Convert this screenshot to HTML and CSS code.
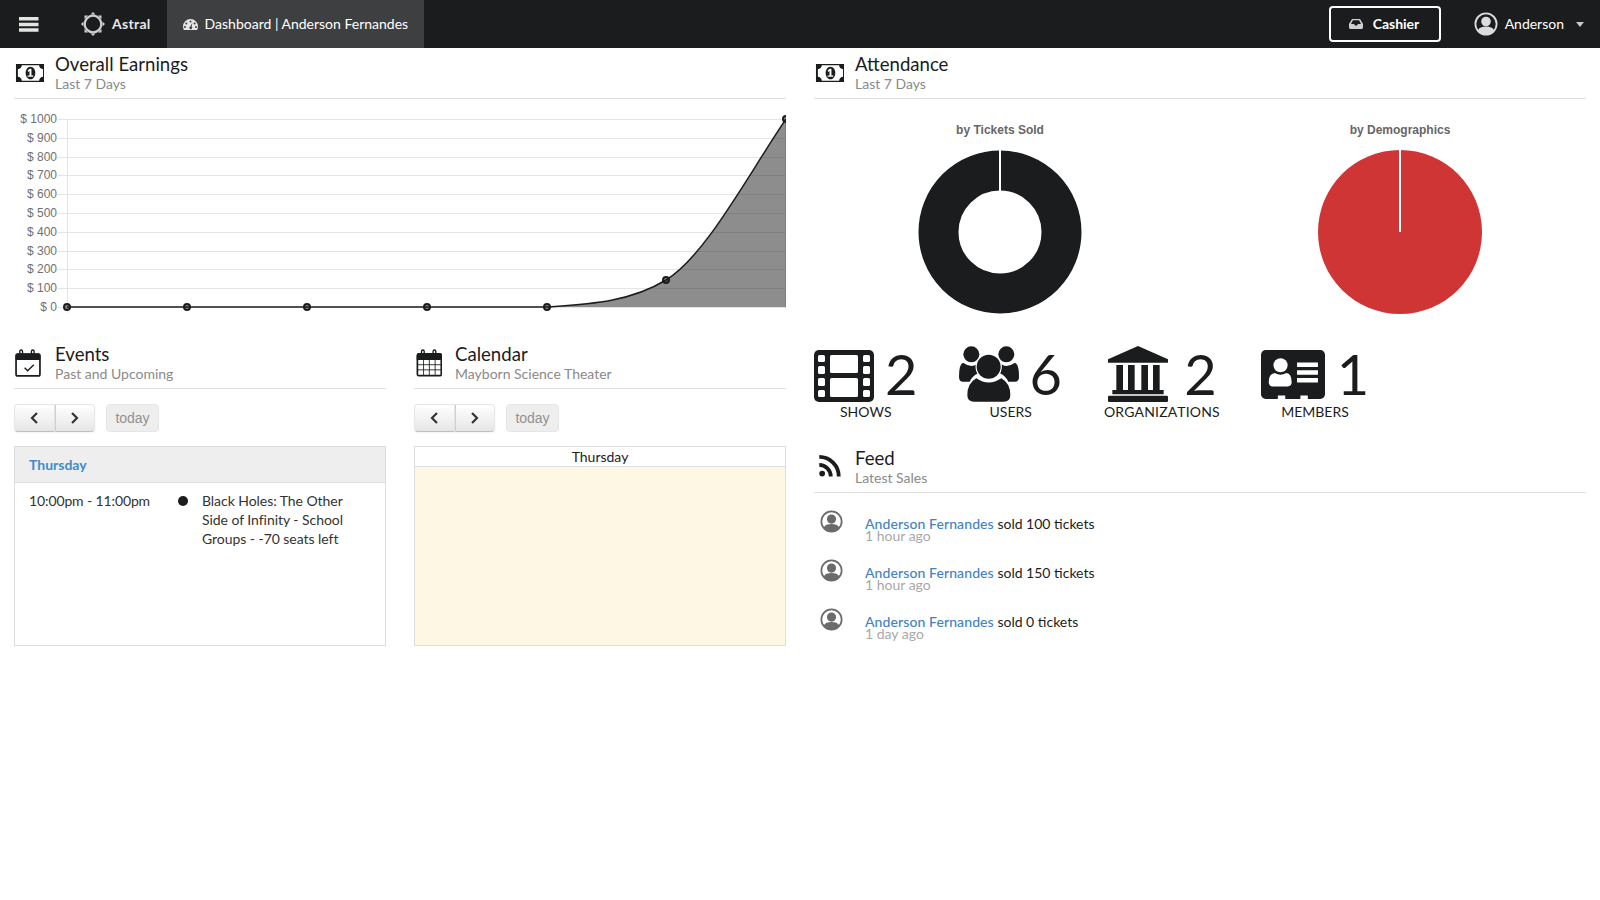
FILE: index.html
```html
<!DOCTYPE html>
<html lang="en">
<head>
<meta charset="utf-8">
<title>Dashboard | Anderson Fernandes</title>
<link rel="stylesheet" href="styles.css">
</head>
<body>
<svg class="defs" width="0" height="0" aria-hidden="true">
  <defs>
    <symbol id="money" viewBox="64 320 1920 1152"><path d="M896 1152h384v-96h-128v-448h-114l-148 137 77 80q42-37 55-57h2v288h-128v96zm512-256q0 70-21 142t-59.500 134-101.500 101-138 39-138-39-101.500-101-59.500-134-21-142 21-142 59.500-134 101.500-101 138-39 138 39 101.500 101 59.500 134 21 142zm512 256v-512q-106 0-181-75t-75-181h-1152q0 106-75 181t-181 75v512q106 0 181 75t75 181h1152q0-106 75-181t181-75zm128-832v1152q0 26-19 45t-45 19h-1792q-26 0-45-19t-19-45v-1152q0-26 19-45t45-19h1792q26 0 45 19t19 45z"/></symbol>
    <symbol id="avatar" viewBox="0 0 24 24">
      <circle cx="12" cy="12" r="10.600" fill="none" stroke="currentColor" stroke-width="1.800"/>
      <circle cx="12" cy="9.500" r="4.800" fill="currentColor"/>
      <path d="M3.800 18.500C5 15.500 8 14.500 12 14.500s7 1 8.200 4A10.600 10.600 0 0 1 12 22.600 10.600 10.600 0 0 1 3.800 18.500z" fill="currentColor"/>
    </symbol>
    <symbol id="chev-left" viewBox="0 0 12 14"><path d="M9 2 4 7l5 5" fill="none" stroke="currentColor" stroke-width="2.200"/></symbol>
    <symbol id="chev-right" viewBox="0 0 12 14"><path d="m3 2 5 5-5 5" fill="none" stroke="currentColor" stroke-width="2.200"/></symbol>
  </defs>
</svg>

<nav class="navbar">
  <a class="nav-burger" aria-label="Menu">
    <svg width="20" height="15" viewBox="0 0 20 15"><path d="M0 0h19.500v3.500H0zM0 5.700h19.500v3.500H0zM0 11.300h19.500v3.500H0z"/></svg>
  </a>
  <a class="nav-brand">
    <svg class="brand-sun" width="24" height="24" viewBox="-12 -12 24 24">
      <circle r="8.300" fill="none" stroke="currentColor" stroke-width="2.200"/>
      <g fill="currentColor">
        <path d="M-2.500-9.500 0-12 2.500-9.500z"/>
        <path d="M-2.500-9.500 0-12 2.500-9.500z" transform="rotate(45)"/>
        <path d="M-2.500-9.500 0-12 2.500-9.500z" transform="rotate(90)"/>
        <path d="M-2.500-9.500 0-12 2.500-9.500z" transform="rotate(135)"/>
        <path d="M-2.500-9.500 0-12 2.500-9.500z" transform="rotate(180)"/>
        <path d="M-2.500-9.500 0-12 2.500-9.500z" transform="rotate(225)"/>
        <path d="M-2.500-9.500 0-12 2.500-9.500z" transform="rotate(270)"/>
        <path d="M-2.500-9.500 0-12 2.500-9.500z" transform="rotate(315)"/>
      </g>
    </svg>
    <span>Astral</span>
  </a>
  <a class="nav-tab">
    <svg width="15" height="11" viewBox="0 0 15 11"><path fill-rule="evenodd" d="M7.500 0A7.500 7.500 0 0 0 0 7.500c0 1.300.3 2.500.9 3.500h13.200c.6-1 .9-2.200.9-3.500A7.500 7.500 0 0 0 7.500 0zM7.500 1.500a1 1 0 1 1 0 2 1 1 0 0 1 0-2zM3.300 3.400a1 1 0 1 1 0 2 1 1 0 0 1 0-2zM11.700 3.400a1 1 0 1 1 0 2 1 1 0 0 1 0-2zM2 7a1 1 0 1 1 0 2 1 1 0 0 1 0-2zM13 7a1 1 0 1 1 0 2 1 1 0 0 1 0-2zM9.500 3.500 8.600 7.600a1.400 1.400 0 1 1-1.300-.2z"/></svg>
    <span>Dashboard | Anderson Fernandes</span>
  </a>
  <div class="nav-spacer"></div>
  <a class="nav-cashier">
    <svg width="14" height="10" viewBox="0 0 14 10"><path fill-rule="evenodd" d="M3 0h8l3 5v3.500c0 .8-.7 1.500-1.500 1.500h-11C.7 10 0 9.300 0 8.500V5zm.9 1.300L2 5h3l1 1.500h2L9 5h3l-1.900-3.700z"/></svg>
    <span>Cashier</span>
  </a>
  <a class="nav-user">
    <svg class="user-avatar" width="24" height="24"><use href="#avatar"/></svg>
    <span>Anderson</span>
    <i class="caret"></i>
  </a>
</nav>

<main class="page">
  <div class="column">
    <section class="panel">
      <header class="head">
        <svg class="head-icon icon-money" width="29" height="18"><use href="#money"/></svg>
        <div><h2>Overall Earnings</h2><p>Last 7 Days</p></div>
      </header>
      <svg class="earnings" viewBox="14 108 772 210" width="772" height="210" role="img" aria-label="Earnings chart">
        <g class="grid">
          <path d="M58 119.500H786M58 138.500H786M58 157.500H786M58 175.500H786M58 194.500H786M58 213.500H786M58 232.500H786M58 251.500H786M58 269.500H786M58 288.500H786M58 307.500H786M67.500 119V313M785.500 119V307"/>
        </g>
        <g class="ticks">
          <text x="57" y="123">$ 1000</text>
          <text x="57" y="142">$ 900</text>
          <text x="57" y="161">$ 800</text>
          <text x="57" y="179">$ 700</text>
          <text x="57" y="198">$ 600</text>
          <text x="57" y="217">$ 500</text>
          <text x="57" y="236">$ 400</text>
          <text x="57" y="255">$ 300</text>
          <text x="57" y="273">$ 200</text>
          <text x="57" y="292">$ 100</text>
          <text x="57" y="311">$ 0</text>
        </g>
        <path class="area" d="M547 307C590 304 630 302 666 280C705 256 745 180 786 119V307Z"/>
        <path class="line" d="M67 307H547C590 304 630 302 666 280C705 256 745 180 786 119"/>
        <g class="points">
          <circle cx="67" cy="307" r="3"/><circle cx="187" cy="307" r="3"/><circle cx="307" cy="307" r="3"/><circle cx="427" cy="307" r="3"/><circle cx="547" cy="307" r="3"/><circle cx="666" cy="280" r="3"/><circle cx="786" cy="119" r="3"/>
        </g>
      </svg>
    </section>

    <div class="split">
      <section class="panel">
        <header class="head">
          <svg class="head-icon icon-cal" width="26" height="28" viewBox="48 30 76 82"><rect x="51" y="45" width="70" height="64" rx="5" fill="none" stroke="currentColor" stroke-width="5"/><path d="M50 62h72v-14q0-5-5-5H55q-5 0-5 5z"/><path d="M62 44V37q0-4 4-4t4 4v7M96 44V37q0-4 4-4t4 4v7" fill="none" stroke="currentColor" stroke-width="4"/><path d="m76 85 9 9 18-18" fill="none" stroke="currentColor" stroke-width="4"/></svg>
          <div><h2>Events</h2><p>Past and Upcoming</p></div>
        </header>
        <div class="toolbar">
          <div class="btn-pair">
            <button class="btn" aria-label="Previous"><svg width="12" height="14"><use href="#chev-left"/></svg></button>
            <button class="btn" aria-label="Next"><svg width="12" height="14"><use href="#chev-right"/></svg></button>
          </div>
          <button class="btn today" disabled>today</button>
        </div>
        <div class="box">
          <div class="list-day">Thursday</div>
          <div class="list-row">
            <span class="list-time">10:00pm - 11:00pm</span>
            <i class="list-dot"></i>
            <span class="list-title">Black Holes: The Other Side of Infinity - School Groups - -70 seats left</span>
          </div>
        </div>
      </section>
      <section class="panel">
        <header class="head">
          <svg class="head-icon icon-cal cal-shift" width="26" height="28" viewBox="48 30 76 82"><rect x="52" y="46" width="70" height="62" rx="4" fill="none" stroke="currentColor" stroke-width="5"/><path d="M50 62h74V47q0-5-5-5H55q-5 0-5 5z"/><path d="M64 44V37q0-4 4-4t4 4v7M98 44V37q0-4 4-4t4 4v7" fill="none" stroke="currentColor" stroke-width="4"/><path d="M70 62v44M87 62v44M104 62v44M52 76h70M52 91h70" fill="none" stroke="currentColor" stroke-width="2.500"/></svg>
          <div><h2>Calendar</h2><p>Mayborn Science Theater</p></div>
        </header>
        <div class="toolbar">
          <div class="btn-pair">
            <button class="btn" aria-label="Previous"><svg width="12" height="14"><use href="#chev-left"/></svg></button>
            <button class="btn" aria-label="Next"><svg width="12" height="14"><use href="#chev-right"/></svg></button>
          </div>
          <button class="btn today" disabled>today</button>
        </div>
        <div class="box cal-box">
          <div class="cal-day">Thursday</div>
          <div class="cal-body"></div>
        </div>
      </section>
    </div>
  </div>

  <div class="column">
    <section class="panel">
      <header class="head">
        <svg class="head-icon icon-money" width="29" height="18"><use href="#money"/></svg>
        <div><h2>Attendance</h2><p>Last 7 Days</p></div>
      </header>
      <div class="split pies">
        <figure class="pie">
          <figcaption>by Tickets Sold</figcaption>
          <svg width="164" height="164" viewBox="-82 -82 164 164" role="img" aria-label="by Tickets Sold">
            <circle class="donut" r="61.500" />
            <path class="slice" d="M0-82V-41"/>
          </svg>
        </figure>
        <figure class="pie">
          <figcaption>by Demographics</figcaption>
          <svg width="164" height="164" viewBox="-82 -82 164 164" role="img" aria-label="by Demographics">
            <circle class="full" r="82"/>
            <path class="slice" d="M0-82V0"/>
          </svg>
        </figure>
      </div>
    </section>

    <div class="stats">
      <div class="stat">
        <div class="stat-value film-value">
          <svg class="film" width="60" height="52" viewBox="0 0 60 52"><rect width="60" height="52" rx="5" class="ink"/><g class="cut"><rect x="4" y="5" width="7" height="7" rx="1.500"/><rect x="4" y="16" width="7" height="8" rx="1.500"/><rect x="4" y="28" width="7" height="8" rx="1.500"/><rect x="4" y="40" width="7" height="7" rx="1.500"/><rect x="49" y="5" width="7" height="7" rx="1.500"/><rect x="49" y="16" width="7" height="8" rx="1.500"/><rect x="49" y="28" width="7" height="8" rx="1.500"/><rect x="49" y="40" width="7" height="7" rx="1.500"/><rect x="16" y="5" width="28" height="18" rx="1.500"/><rect x="16" y="28" width="28" height="19" rx="1.500"/></g></svg>
          <span>2</span>
        </div>
        <div class="stat-label">Shows</div>
      </div>
      <div class="stat">
        <div class="stat-value">
          <svg width="60" height="56" viewBox="478 18 180 168"><g class="ink"><circle cx="515" cy="43" r="24"/><circle cx="620" cy="43" r="24"/><path d="M510 125H490Q478 125 478 110Q478 72 490 68Q515 85 532 72Q530 85 535 100Q518 108 510 125Z"/><path d="M626 125H646Q658 125 658 110Q658 72 646 68Q621 85 604 72Q606 85 601 100Q618 108 626 125Z"/><g class="ringed"><circle cx="567" cy="80" r="36"/><path d="M503 165Q503 130 530 115Q567 140 605 115Q632 130 632 165Q632 185 612 185H523Q503 185 503 165Z"/></g></g></svg>
          <span>6</span>
        </div>
        <div class="stat-label">Users</div>
      </div>
      <div class="stat stat-org">
        <div class="stat-value org-value">
          <svg width="62" height="56" viewBox="54 18 182 168"><g class="ink"><path d="M145 18 235 58V68H55V58Z"/><path d="M80 75h20v75H80zM115 75h20v75h-20zM155 75h20v75h-20zM190 75h20v75h-20zM68 150h154v13H68z"/><rect x="55" y="167" width="180" height="19" rx="4"/></g></svg>
          <span>2</span>
        </div>
        <div class="stat-label org-label">Organizations</div>
      </div>
      <div class="stat">
        <div class="stat-value member-value">
          <svg width="64" height="49" viewBox="515 30 190 145"><rect x="515" y="30" width="190" height="145" rx="14" class="ink"/><g class="cut"><circle cx="573" cy="75" r="21"/><path d="M538 125Q538 100 556 98Q573 108 590 98Q606 100 606 125Q606 138 594 138H550Q538 138 538 125Z"/><path d="M622 67h62v13h-62zM622 90h62v13h-62zM622 113h62v13h-62zM565 165h22v10h-22zM632 165h22v10h-22z"/></g></svg>
          <span>1</span>
        </div>
        <div class="stat-label">Members</div>
      </div>
    </div>

    <section class="panel">
      <header class="head">
        <svg class="head-icon icon-rss" width="23" height="23" viewBox="52 44 72 72"><circle cx="65" cy="102" r="9"/><path d="M56 75A36 36 0 0 1 92 111M56 50A61 61 0 0 1 117 111" fill="none" stroke="currentColor" stroke-width="12"/></svg>
        <div><h2>Feed</h2><p>Latest Sales</p></div>
      </header>
      <ul class="feed">
        <li class="feed-item">
          <svg class="feed-avatar" width="23" height="23"><use href="#avatar"/></svg>
          <div class="feed-text"><div><a>Anderson Fernandes</a> sold 100 tickets</div><time>1 hour ago</time></div>
        </li>
        <li class="feed-item">
          <svg class="feed-avatar" width="23" height="23"><use href="#avatar"/></svg>
          <div class="feed-text"><div><a>Anderson Fernandes</a> sold 150 tickets</div><time>1 hour ago</time></div>
        </li>
        <li class="feed-item">
          <svg class="feed-avatar" width="23" height="23"><use href="#avatar"/></svg>
          <div class="feed-text"><div><a>Anderson Fernandes</a> sold 0 tickets</div><time>1 day ago</time></div>
        </li>
      </ul>
    </section>
  </div>
</main>
</body>
</html>
```

FILE: styles.css
```css
* { box-sizing: border-box; }
html, body { margin: 0; padding: 0; }
body {
  background: #fff;
  color: #1b1c1d;
  font-family: Lato, "Open Sans", sans-serif;
  font-size: 14px;
  line-height: 19px;
}
.defs { position: absolute; }

/* navbar */
.navbar {
  display: flex;
  align-items: center;
  height: 48px;
  background: #1b1c1d;
  color: #fff;
}
.navbar span { padding-bottom: 2px; }
.nav-burger { display: flex; margin-left: 19px; fill: #e4e4e4; }
.nav-brand {
  display: flex;
  align-items: center;
  gap: 7px;
  margin-left: 42px;
  font-weight: 700;
  letter-spacing: 0.3px;
  color: #e8e8e8;
}
.brand-sun { color: #d0d0d0; }
.nav-tab {
  display: flex;
  align-items: center;
  gap: 7px;
  height: 48px;
  margin-left: 16px;
  padding: 0 16px;
  background: #3e3f40;
  fill: #e6e6e6;
}
.nav-spacer { flex: 1; }
.nav-cashier {
  display: flex;
  align-items: center;
  gap: 10px;
  width: 112px;
  height: 36px;
  padding-left: 18px;
  border: 2px solid #fff;
  border-radius: 4px;
  font-weight: 700;
  fill: #cfcfcf;
}
.nav-user {
  display: flex;
  align-items: center;
  margin-left: 33px;
  margin-right: 16px;
}
.user-avatar { color: #dcdcdc; margin-right: 7px; }
.caret {
  margin-left: 12px;
  border-top: 5px solid #c8c8c8;
  border-left: 4.500px solid transparent;
  border-right: 4.500px solid transparent;
}

/* page grid */
.page {
  display: grid;
  grid-template-columns: 772px 772px;
  gap: 28px;
  padding: 0 14px;
}
.split {
  display: grid;
  grid-template-columns: 372px 372px;
  gap: 28px;
}
.column > .split { margin-top: 20px; }

/* section headers */
.head {
  display: flex;
  align-items: center;
  height: 51px;
  padding-bottom: 1px;
  border-bottom: 1px solid #dedede;
}
.head h2 {
  margin: 0;
  padding-top: 2px;
  font-size: 18.600px;
  font-weight: 400;
  line-height: 21px;
  color: #1b1c1d;
}
.head p {
  margin: 0;
  font-size: 14px;
  line-height: 18px;
  color: #8a8a8a;
}
.head-icon { flex: none; margin-right: 12px; fill: #1b1c1d; color: #1b1c1d; }
.icon-money { margin-left: 1px; margin-right: 11px; }
.icon-cal { margin-left: 1px; margin-right: 14px; }
.cal-shift { margin-left: 2px; margin-right: 13px; }
.icon-rss { margin-left: 4px; margin-right: 14px; }

/* earnings chart */
.earnings { display: block; margin-top: 9px; }
.grid path { fill: none; stroke: #e4e4e4; stroke-width: 1; }
.ticks text {
  font-family: "Liberation Sans", Arial, sans-serif;
  font-size: 12px;
  fill: #707070;
  text-anchor: end;
}
.area { fill: rgba(27, 28, 29, 0.5); }
.line { fill: none; stroke: #1b1c1d; stroke-width: 1.500; }
.points circle { fill: rgba(27, 28, 29, 0.5); stroke: #1b1c1d; stroke-width: 2; }

/* toolbar */
.toolbar { display: flex; gap: 11px; margin-top: 15px; }
.btn-pair { display: flex; }
.btn {
  display: flex;
  align-items: center;
  justify-content: center;
  width: 40.500px;
  height: 28px;
  padding: 0;
  border: 1px solid;
  border-color: #e6e6e6 #e6e6e6 #bfbfbf;
  background: linear-gradient(#ffffff, #e6e6e6);
  box-shadow: inset 0 1px 0 rgba(255, 255, 255, 0.2), 0 1px 2px rgba(0, 0, 0, 0.05);
  color: #333;
  font-family: "Liberation Sans", Arial, sans-serif;
  font-size: 14px;
}
.btn-pair .btn:first-child { border-radius: 4px 0 0 4px; }
.btn-pair .btn:last-child { border-radius: 0 4px 4px 0; border-left-color: #cfcfcf; }
.today { width: 53px; border-radius: 4px; opacity: 0.65; background: #e6e6e6; color: #555; box-shadow: none; border-color: #d8d8d8; }

/* list + calendar */
.box {
  height: 200px;
  margin-top: 14px;
  border: 1px solid #ddd;
}
.list-day {
  height: 36px;
  padding: 8px 14px;
  background: #eee;
  border-bottom: 1px solid #ddd;
  color: #428bca;
  font-weight: 700;
}
.list-row {
  display: flex;
  align-items: flex-start;
  padding: 8px 14px;
  color: #333;
}
.list-time { width: 149px; flex: none; letter-spacing: -0.12px; }
.list-dot {
  flex: none;
  width: 10px;
  height: 10px;
  margin-top: 5px;
  border-radius: 50%;
  background: #1b1c1d;
}
.list-title { margin-left: 14px; width: 150px; letter-spacing: -0.05px; }
.cal-box { display: flex; flex-direction: column; }
.cal-day {
  height: 20px;
  line-height: 20px;
  text-align: center;
  border-bottom: 1px solid #ddd;
}
.cal-body { flex: 1; background: #fdf7e3; }

/* pies */
.pies { margin-top: 23px; }
.pie { margin: 0; display: flex; flex-direction: column; align-items: center; }
.pie figcaption {
  font-family: "Liberation Sans", Arial, sans-serif;
  font-size: 12px;
  font-weight: 700;
  line-height: 16px;
  color: #666;
  margin-bottom: 12px;
}
.pie svg { display: block; }
.donut { fill: none; stroke: #1b1c1d; stroke-width: 40; }
.full { fill: #d03535; }
.slice { stroke: #fff; stroke-width: 2; fill: none; }

/* statistics */
.stats { display: flex; align-items: flex-start; gap: 42px; margin-top: 32px; }
.stat { display: flex; flex-direction: column; align-items: center; }
.stat-org { margin-right: -1px; }
.stat-value {
  display: flex;
  align-items: center;
  gap: 10px;
  height: 56px;
  font-size: 56px;
  font-weight: 400;
  line-height: 56px;
}
.film-value { gap: 11px; }
.org-value { gap: 15px; }
.member-value { gap: 12px; }
.film { margin-top: 4px; }
.stat-label {
  margin-top: 1px;
  text-transform: uppercase;
  font-size: 14px;
  line-height: 18px;
  font-kerning: none;
  color: #1b1c1d;
}
.org-label { letter-spacing: 0.15px; }
.ink { fill: #1b1c1d; }
.cut { fill: #fff; }
.ringed { stroke: #fff; stroke-width: 7; paint-order: stroke; }

/* feed */
.stats + .panel { margin-top: 21px; }
.feed { list-style: none; margin: 10px 0 0; padding: 0; }
.feed-item { display: flex; height: 49px; padding: 7px 0 0 6px; }
.feed-avatar { flex: none; color: #6b6b6b; }
.feed-text { margin-left: 22px; padding-top: 6.500px; line-height: 13px; }
.feed-text a { color: #4183c4; font-weight: 500; letter-spacing: 0.1px; }
.feed-text time { display: block; font-size: 14px; line-height: 11px; color: #a8a8a8; }
```
